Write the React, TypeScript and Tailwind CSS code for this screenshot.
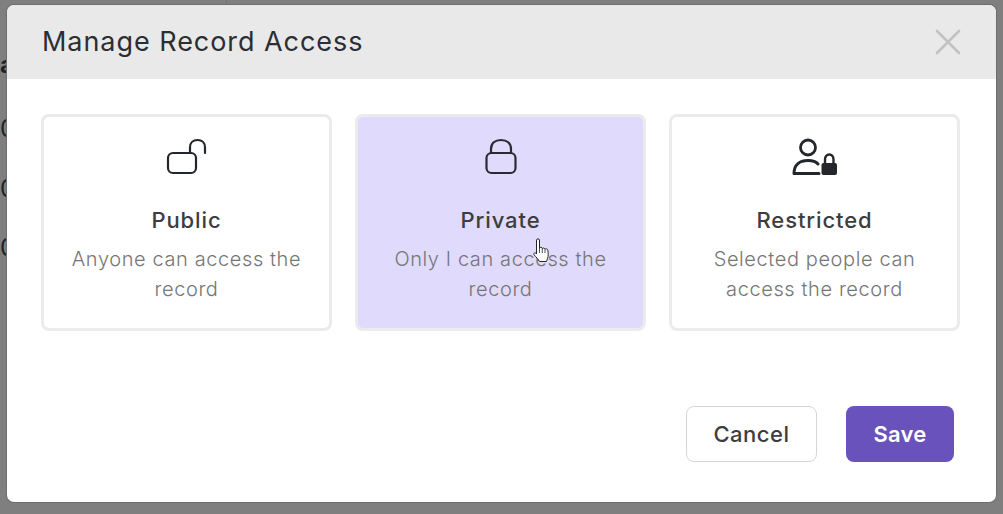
const font = { fontFamily: '"Inter", "Noto Sans", sans-serif' };

function OpenLockIcon() {
  return (
    <svg width="42" height="38" viewBox="0 0 42 38" fill="none" stroke="#23262b" strokeWidth="2.2" strokeLinecap="round" strokeLinejoin="round">
      <rect x="2" y="15" width="28" height="20" rx="5" />
      <path d="M24 15V9.5C24 5 27 2 31.5 2S39 5 39 9.5V15" />
    </svg>
  );
}

function LockIcon() {
  return (
    <svg width="32" height="38" viewBox="0 0 32 38" fill="none" stroke="#2a2a30" strokeWidth="2.2" strokeLinecap="round" strokeLinejoin="round">
      <rect x="1.5" y="15" width="29" height="20" rx="5" />
      <path d="M6 15V11C6 5 10 2 16 2S26 5 26 11V15" />
    </svg>
  );
}

function PersonLockIcon() {
  return (
    <svg width="46" height="38" viewBox="0 0 46 38" fill="none">
      <circle cx="16" cy="9.5" r="7.5" stroke="#23262b" strokeWidth="2.8" />
      <path d="M2 35.5C2 26.5 8 22.5 16 22.5C20.5 22.5 24 23.5 26 26M2 35.5H27" stroke="#23262b" strokeWidth="3" strokeLinecap="round" strokeLinejoin="round" />
      <rect x="29.5" y="25" width="15.5" height="12" rx="2" fill="#23262b" />
      <path d="M33 26V21.5C33 18.5 34.9 16.5 37.3 16.5S41.5 18.5 41.5 21.5V26" stroke="#23262b" strokeWidth="2.4" />
    </svg>
  );
}

function HandCursor() {
  return (
    <svg width="17" height="25" viewBox="0 0 17 25" className="absolute left-[175px] top-[121px]">
      <path
        d="M3.5 2C3.5 .5 6.5 .5 6.5 2V10C7 9 9 9 9.3 10.5C9.8 9.7 11.6 9.9 12 11.2C12.6 10.5 14.6 10.7 14.8 12.2C15.3 15.5 15.5 18 14.5 20.5L13.5 23.5H6.5C5.5 21.5 3.5 19.5 1.2 17C.2 15.5 1.7 14 3.2 15.5L3.5 16Z"
        fill="#fff"
        stroke="#23262b"
        strokeWidth="1"
        strokeLinejoin="round"
      />
      <path d="M6.5 10V15M9.3 10.5V15M12 11.2V15" stroke="#23262b" strokeWidth="0.8" />
    </svg>
  );
}

const options = [
  { title: "Public", lines: ["Anyone can access the", "record"], icon: <OpenLockIcon />, shift: "pl-[1px]" },
  { title: "Private", lines: ["Only I can access the", "record"], icon: <LockIcon />, selected: true },
  { title: "Restricted", lines: ["Selected people can", "access the record"], icon: <PersonLockIcon />, shift: "" },
];

export default function App() {
  return (
    <div className="relative h-[514px] w-[1003px] overflow-hidden bg-[#7f7f7f] pl-[7px] pt-[5px]" style={font}>
      {/* page behind the overlay */}
      <span className="absolute left-0 top-[52px] text-[24px] font-bold leading-[26px] text-[#1d2328]">a</span>
      <span className="absolute left-0 top-[116px] text-[24px] leading-[26px] text-[#1d2328]">0</span>
      <span className="absolute left-0 top-[176px] text-[24px] leading-[26px] text-[#1d2328]">0</span>
      <span className="absolute left-0 top-[235px] text-[24px] leading-[26px] text-[#1d2328]">0</span>
      <div className="absolute left-[226px] top-0 h-[5px] w-px bg-[#727272]" />

      <div className="relative flex h-[497px] w-[989px] flex-col overflow-hidden rounded-[7px] bg-white shadow-[0_0_0_1px_#6e6e6e]">
        <div className="flex h-[74px] items-center justify-between bg-[#e9e9e9] pl-[35px] pr-[35px]">
          <h1 className="text-[27px] font-normal leading-[32px] tracking-[0.95px] text-[#2b2e33]">Manage Record Access</h1>
          <svg width="26" height="26" viewBox="0 0 26 26" fill="none" stroke="#c2c2c2" strokeWidth="2.6" strokeLinecap="round">
            <path d="M2 2L24 24M24 2L2 24" />
          </svg>
        </div>

        <div className="flex flex-1 flex-col px-[34px] pt-[35px]">
          <div className="grid grid-cols-[291px_291px_291px] gap-x-[23px]">
            {options.map((o) => (
              <div
                key={o.title}
                className={`relative flex h-[217px] flex-col items-center rounded-[8px] border-[3px] border-[#ebebeb] pt-[21px] ${
                  o.selected ? "bg-[#e0dafd]" : "bg-white"
                }`}
              >
                <div className={`flex h-[38px] items-end ${o.shift ?? ""}`}>{o.icon}</div>
                <div className="mt-[30px] text-[22px] font-medium leading-[28px] tracking-[0.9px] text-[#3d3d3f]">{o.title}</div>
                <div className="mt-[10px] text-center text-[20px] font-light leading-[30px] tracking-[0.6px] text-[#767676]">
                  {o.lines.map((l) => (
                    <div key={l}>{l}</div>
                  ))}
                </div>
                {o.selected && <HandCursor />}
              </div>
            ))}
          </div>

          <div className="mt-[75px] flex justify-end gap-[29px] pr-[8px]">
            <button className="h-[56px] w-[131px] rounded-[8px] border border-[#d6d6d6] bg-white text-[22px] font-medium tracking-[0.5px] text-[#3d3d3f]">
              Cancel
            </button>
            <button className="h-[56px] w-[108px] rounded-[8px] bg-[#6a52bd] text-[22px] font-semibold tracking-[0.2px] text-white">Save</button>
          </div>
        </div>
      </div>
    </div>
  );
}
